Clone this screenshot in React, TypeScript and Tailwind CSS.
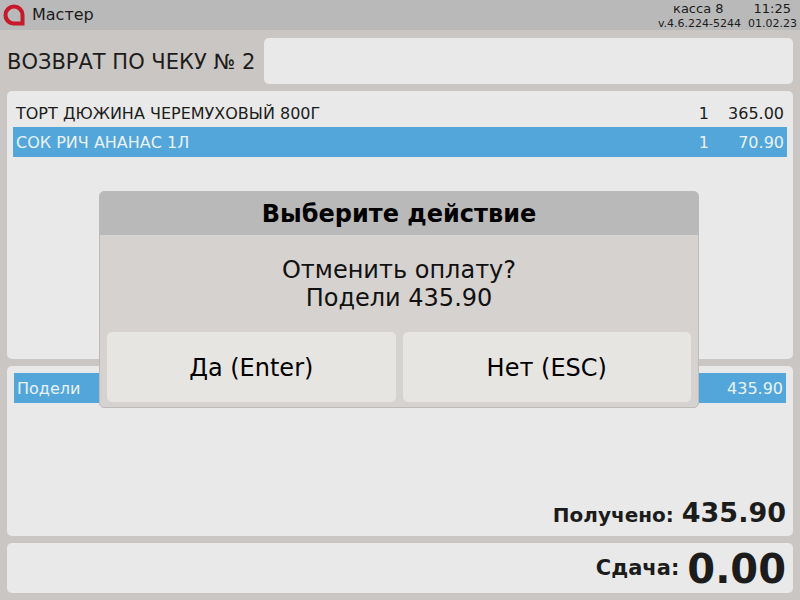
const font = { fontFamily: '"DejaVu Sans", sans-serif' };

function Logo() {
  return (
    <svg width="22" height="22" viewBox="0 0 22 22" className="shrink-0">
      <path
        fillRule="evenodd"
        d="M11 0.5a10.5 10.5 0 0 0-10.5 10.5c0 6 4.5 10.5 10.5 10.5h10.5V11A10.5 10.5 0 0 0 11 0.5Zm0 4a6.5 6.5 0 0 1 6.5 6.5v6.5H11a6.5 6.5 0 0 1 0-13Z"
        fill="#c8192c"
      />
    </svg>
  );
}

function App() {
  return (
    <div className="relative w-[800px] h-[600px] overflow-hidden flex flex-col bg-[#cac6c3] text-[#1c1c1c]" style={font}>
      <header className="h-[30px] shrink-0 bg-[#b9b9b9] flex items-center justify-between pl-[3px] pr-[3px]">
        <div className="flex items-center gap-[7px]">
          <Logo />
          <span className="text-[16px] leading-none">Мастер</span>
        </div>
        <div className="flex flex-col items-end self-stretch pt-[1px]">
          <div className="flex text-[13px] leading-[16px] gap-[30px] pr-[6px]">
            <span>касса 8</span>
            <span>11:25</span>
          </div>
          <div className="flex text-[11px] leading-[14px] gap-[7px]">
            <span>v.4.6.224-5244</span>
            <span>01.02.23</span>
          </div>
        </div>
      </header>

      <main className="flex-1 flex flex-col gap-[7px] pt-[8px] px-[7px] pb-[7px]">
        <div className="h-[46px] flex items-center gap-[9px]">
          <h1 className="text-[21px] whitespace-nowrap pt-[3px]">ВОЗВРАТ ПО ЧЕКУ № 2</h1>
          <div className="flex-1 h-full bg-[#e9e9e9] rounded-[5px]" />
        </div>

        <section className="h-[268px] bg-[#e9e9e9] rounded-[5px] pt-[6px] px-[6px] text-[16px]">
          <div className="h-[30px] flex items-center px-[3px] pt-[3px]">
            <span className="flex-1">ТОРТ ДЮЖИНА ЧЕРЕМУХОВЫЙ 800Г</span>
            <span className="w-[12px] text-right">1</span>
            <span className="w-[75px] text-right">365.00</span>
          </div>
          <div className="h-[30px] flex items-center px-[3px] pt-[2px] bg-[#53a6d9] text-[#e9f2f8]">
            <span className="flex-1">СОК РИЧ АНАНАС 1Л</span>
            <span className="w-[12px] text-right">1</span>
            <span className="w-[75px] text-right">70.90</span>
          </div>
        </section>

        <section className="h-[170px] bg-[#e9e9e9] rounded-[5px] pt-[7px] px-[7px] flex flex-col">
          <div className="h-[30px] shrink-0 flex items-center justify-between px-[3px] pt-[2px] bg-[#53a6d9] text-[#e9f2f8] text-[16px]">
            <span>Подели</span>
            <span>435.90</span>
          </div>
          <div className="mt-auto mb-[6px] flex items-baseline justify-end gap-[8px]">
            <span className="text-[20px] font-bold">Получено:</span>
            <span className="text-[27px] font-bold leading-[34px]">435.90</span>
          </div>
        </section>

        <section className="h-[50px] bg-[#e9e9e9] rounded-[5px] flex items-center justify-end gap-[8px] pr-[7px] pt-[2px]">
          <span className="text-[21px] font-bold">Сдача:</span>
          <span className="text-[40px] font-bold leading-[48px]">0.00</span>
        </section>
      </main>

      <div className="absolute left-[99px] top-[191px] w-[600px] h-[217px] rounded-[5px] border border-[#bdbab8] bg-[#d6d2cf] overflow-hidden flex flex-col text-black">
        <div className="h-[43px] shrink-0 bg-[#b9b9b9] flex items-center justify-center text-[24px] font-bold">
          Выберите действие
        </div>
        <div className="h-[97px] shrink-0 pt-[21px] text-center text-[24px] leading-[28px] text-[#111111]">
          <div>Отменить оплату?</div>
          <div>Подели 435.90</div>
        </div>
        <div className="flex gap-[7px] px-[7px]">
          <button className="flex-1 h-[70px] pt-[2px] bg-[#e7e5e2] rounded-[5px] text-[24px]">Да (Enter)</button>
          <button className="flex-1 h-[70px] pt-[2px] bg-[#e7e5e2] rounded-[5px] text-[24px]">Нет (ESC)</button>
        </div>
      </div>
    </div>
  );
}

export default App;
